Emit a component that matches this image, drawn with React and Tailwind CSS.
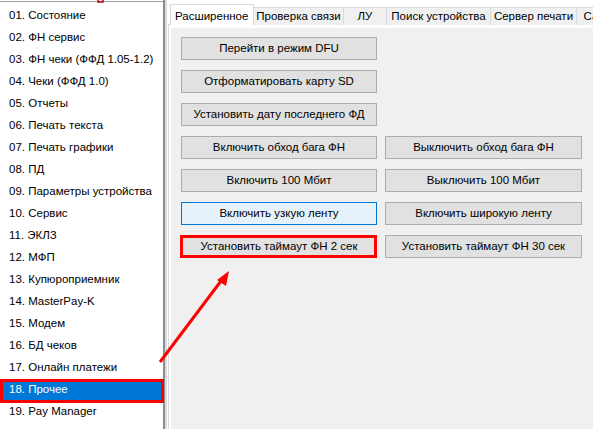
import React from 'react';

const items = [
  '01. Состояние',
  '02. ФН сервис',
  '03. ФН чеки (ФФД 1.05-1.2)',
  '04. Чеки (ФФД 1.0)',
  '05. Отчеты',
  '06. Печать текста',
  '07. Печать графики',
  '08. ПД',
  '09. Параметры устройства',
  '10. Сервис',
  '11. ЭКЛЗ',
  '12. МФП',
  '13. Купюроприемник',
  '14. MasterPay-K',
  '15. Модем',
  '16. БД чеков',
  '17. Онлайн платежи',
  '18. Прочее',
  '19. Pay Manager',
];

const tabs = [
  { label: 'Проверка связи', w: 'w-[91px]' },
  { label: 'ЛУ', w: 'w-[44px]' },
  { label: 'Поиск устройства', w: 'w-[105px]' },
  { label: 'Сервер печати', w: 'w-[87px]' },
  { label: 'Са', w: 'w-[30px]' },
];

const Btn = ({ children, active, marked }) => (
  <button
    className={
      'relative h-[23px] border text-[11.5px] leading-none text-black ' +
      (active ? 'bg-[#e5f1fb] border-[#0078d7]' : 'bg-[#e1e1e1] border-[#adadad]')
    }
  >
    {children}
    {marked && <span className="absolute -left-[2px] -top-[1px] -right-[1px] -bottom-[1px] border-[3px] border-[#ff0000]" />}
  </button>
);

export default function App() {
  return (
    <div
      className="relative w-[593px] h-[429px] flex bg-white overflow-hidden text-black"
      style={{ fontFamily: '"Liberation Sans", Arial, sans-serif' }}
    >
      {/* list */}
      <div className="w-[163px] h-full mt-[1px] border-t border-[#a0a0a0] bg-white flex flex-col pt-[3px]">
        {items.map((it, i) => {
          const sel = i === 17;
          return (
            <div
              key={it}
              className={
                'relative h-[22px] shrink-0 flex items-center pl-[9px] text-[11.5px] ' +
                (sel ? 'bg-[#0078d7] text-white' : '')
              }
            >
              {it}
              {sel && <span className="absolute left-0 -right-[1px] top-0 -bottom-[2px] border-[3px] border-[#ff0000]" />}
            </div>
          );
        })}
      </div>
      <div className="w-[2px] h-full bg-[#8b8c94]" />
      <div className="w-[2px] h-full bg-[#dcdcdc]" />

      {/* tab control */}
      <div className="flex-1 flex flex-col pl-[1px] pt-[4px] bg-white min-w-0">
        <div className="flex items-end h-[21px] pl-[2px] relative z-10">
          <div className="w-[84px] h-[21px] shrink-0 bg-white border border-b-0 border-[#d9d9d9] text-[11.5px] pl-[4px] pt-[3px]">
            Расширенное
          </div>
          {tabs.map((t) => (
            <div
              key={t.label}
              className={t.w + ' h-[18px] shrink-0 -ml-[1px] bg-[#f0f0f0] border border-b-0 border-[#d9d9d9] text-[11.5px] flex items-center justify-center whitespace-nowrap overflow-hidden'}
            >
              {t.label}
            </div>
          ))}
        </div>
        <div className="flex-1 -mt-[1px] border border-r-0 border-b-0 border-[#d9d9d9] bg-white pl-[2px] pt-[3px]">
          <div className="h-full bg-[#f0f0f0] pl-[10px] pt-[9px]">
            <div className="grid grid-cols-[196px_197px] gap-x-[8px] gap-y-[10px]">
              <Btn>Перейти в режим DFU</Btn>
              <div />
              <Btn>Отформатировать карту SD</Btn>
              <div />
              <Btn>Установить дату последнего ФД</Btn>
              <div />
              <Btn>Включить обход бага ФН</Btn>
              <Btn>Выключить обход бага ФН</Btn>
              <Btn>Включить 100 Мбит</Btn>
              <Btn>Выключить 100 Мбит</Btn>
              <Btn active>Включить узкую ленту</Btn>
              <Btn>Включить широкую ленту</Btn>
              <Btn marked>Установить таймаут ФН 2 сек</Btn>
              <Btn>Установить таймаут ФН 30 сек</Btn>
            </div>
          </div>
        </div>
      </div>

      {/* annotation arrow */}
      <svg className="absolute left-0 top-0 pointer-events-none" width="593" height="429">
        <line x1="160" y1="362" x2="221" y2="281" stroke="#ff0000" strokeWidth="3" />
        <polygon points="229,271 217,280 226,286" fill="#ff0000" />
        <path d="M98 0 V2 H103 V0" stroke="#c00000" strokeWidth="1.5" fill="none" />
      </svg>
    </div>
  );
}
